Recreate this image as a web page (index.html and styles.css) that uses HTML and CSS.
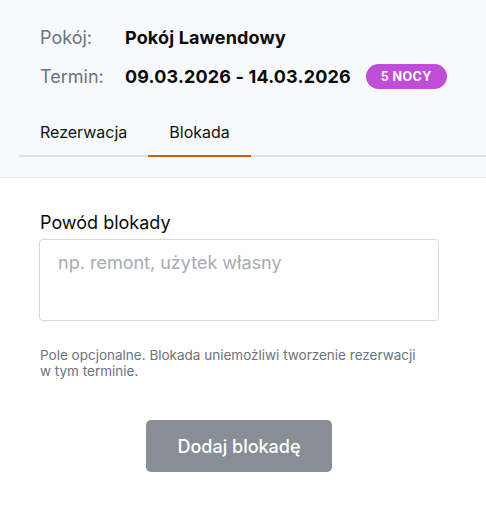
FILE: index.html
```html
<!DOCTYPE html>
<html lang="pl">
<head>
<meta charset="utf-8">
<link rel="stylesheet" href="styles.css">
</head>
<body>
<div class="header">
  <div class="info">
    <div class="row"><span class="label">Pokój:</span><span class="value">Pokój Lawendowy</span></div>
    <div class="row"><span class="label">Termin:</span><span class="value">09.03.2026 - 14.03.2026</span><span class="badge">5 NOCY</span></div>
  </div>
  <div class="tabs">
    <div class="tab">Rezerwacja</div>
    <div class="tab active">Blokada</div>
  </div>
</div>
<div class="body">
  <label class="field-label">Powód blokady</label>
  <div class="textarea"><span class="placeholder">np. remont, użytek własny</span></div>
  <p class="hint">Pole opcjonalne. Blokada uniemożliwi tworzenie rezerwacji w tym terminie.</p>
  <div class="actions"><button class="btn">Dodaj blokadę</button></div>
</div>
</body>
</html>
```
FILE: styles.css
```css
* { box-sizing: border-box; }
html, body { margin: 0; padding: 0; background: #fff; }
body { font-family: Inter, "Noto Sans", sans-serif; color: #111; width: 486px; }
.header { background: #f8f9fb; border-bottom: 1px solid #e5e7eb; padding: 24px 0 20px 19px; }
.info { padding-left: 21px; display: flex; flex-direction: column; gap: 13px; }
.row { display: flex; align-items: center; height: 26px; }
.label { width: 85px; font-size: 18px; color: #6b7280; }
.value { font-size: 18px; font-weight: 700; color: #0b0b0b; letter-spacing: 0.15px; }
.badge { margin-left: 15px; background: #c04dd8; color: #fff; font-size: 12.5px; font-weight: 700; border-radius: 13px; height: 25px; padding: 0 15px; display: flex; align-items: center; letter-spacing: 0.4px; }
.tabs { display: flex; margin-top: 33px; border-bottom: 2px solid #e0e1e6; }
.tab { font-size: 16px; color: #111; padding: 0 21px 13px; margin-bottom: -2px; border-bottom: 2px solid transparent; }
.tab.active { border-bottom-color: #d4580f; }
.body { padding: 34px 47px 0 39px; }
.field-label { display: block; font-size: 18px; color: #0b0b0b; margin-left: 1px; margin-bottom: 6px; }
.textarea { border: 1px solid #d5d8dd; border-radius: 4px; height: 82px; padding: 12px 18px; }
.placeholder { font-size: 18px; color: #a6acb4; }
.hint { margin: 26px 0 0 1px; max-width: 385px; font-size: 13.5px; line-height: 16px; color: #6b7280; }
.actions { display: flex; justify-content: center; margin-top: 41px; }
.btn { width: 186px; height: 52px; background: #878e96; border: none; border-radius: 5px; color: #fff; font-family: inherit; font-size: 18px; font-weight: 500; }
```
